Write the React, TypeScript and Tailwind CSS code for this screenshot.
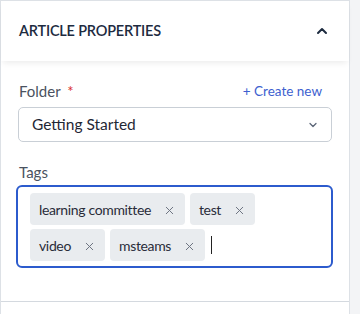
import { ChevronUp, ChevronDown, X } from "lucide-react";

const tags = ["learning committee", "test", "video", "msteams"];

export default function App() {
  return (
    <div className="w-[360px] h-[314px] bg-[#f3f4f6] flex overflow-hidden" style={{ fontFamily: 'Lato, "Noto Sans", sans-serif' }}>
      <div className="w-[350px] h-full bg-white border-l border-t border-r border-[#dde1e6] flex flex-col">
        {/* header */}
        <div className="h-[60px] shrink-0 px-[18px] flex items-center justify-between shadow-[0_4px_6px_-2px_rgba(0,0,0,0.08)]">
          <h2 className="text-[14.5px] font-semibold text-[#1d2b3f] tracking-[-0.2px]">ARTICLE PROPERTIES</h2>
          <ChevronUp className="w-[16px] h-[16px] text-[#1d2b3f] mr-[1px]" strokeWidth={3} />
        </div>

        <div className="px-[15px] pt-[20px] pb-[33px] border-b border-[#d4d9df]">
          {/* folder */}
          <div className="flex items-center justify-between h-[20px] pl-[3px]">
            <span className="text-[15px] text-[#4a5260]">
              Folder <span className="text-[#d92d2d] ml-[3px]">*</span>
            </span>
            <span className="text-[13.5px] text-[#3d5fcf] mr-[12px]">+ Create new</span>
          </div>
          <div className="mt-[6px] h-[35px] ml-[2px] w-[314px] rounded-[5px] border border-[#c9cfd6] flex items-center justify-between pl-[13px] pr-[12px]">
            <span className="text-[15.5px] text-[#1f2735]">Getting Started</span>
            <ChevronDown className="w-[12px] h-[12px] text-[#5a6577]" strokeWidth={2.5} />
          </div>

          {/* tags */}
          <div className="mt-[20px] h-[20px] pl-[3px] flex items-center text-[15px] text-[#4a5260]">Tags</div>
          <div className="mt-[3px] w-[317px] h-[83px] rounded-[6px] border-2 border-[#2c5bcd] pl-[12px] pr-[10px] pt-[6px] flex flex-wrap content-start gap-x-[5px] gap-y-[4px]">
            {tags.map((t) => (
              <div key={t} className="h-[32px] rounded-[4px] bg-[#e9ecef] flex items-center pl-[9px] pr-[9px]">
                <span className="text-[14px] tracking-[-0.35px] text-[#2a2c3a]">{t}</span>
                <X className="w-[13px] h-[13px] ml-[12px] mt-[2px] text-[#6b7280]" strokeWidth={1.8} />
              </div>
            ))}
            <div className="h-[32px] flex items-center pl-[1px]">
              <div className="w-[1px] h-[18px] bg-[#222]" />
            </div>
          </div>
        </div>
      </div>
    </div>
  );
}
